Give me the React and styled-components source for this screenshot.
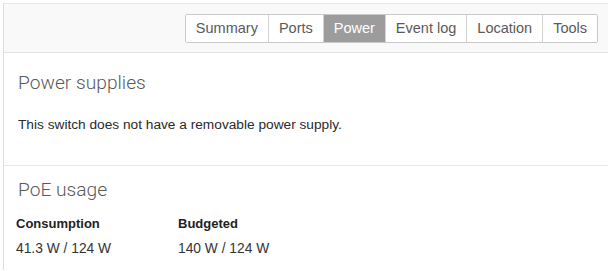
import React from "react";
import styled, { createGlobalStyle } from "styled-components";

const Global = createGlobalStyle`
  html, body { margin: 0; padding: 0; background: #fff; }
  body { font-family: "Liberation Sans", Arial, sans-serif; }
`;

const Page = styled.div`
  padding: 3px 0 0 3px;
`;

const Panel = styled.div`
  border-top: 1px solid #e6e6e6;
  border-left: 1px solid #dcdcdc;
  min-height: 267px;
  box-sizing: border-box;
`;

const Header = styled.div`
  height: 48px;
  background: #f9f9f9;
  border-bottom: 1px solid #e2e2e2;
  display: flex;
  justify-content: flex-end;
  align-items: center;
  padding-right: 10px;
`;

const Tabs = styled.div`
  display: flex;
  border: 1px solid #c9c9c9;
  border-radius: 2px;
  background: #fff;
  margin-top: 1px;
`;

const Tab = styled.div`
  height: 27px;
  line-height: 27px;
  padding: 0 10px;
  font-size: 14.5px;
  color: ${p => (p.$active ? "#fff" : "#5a5a5a")};
  background: ${p => (p.$active ? "#9c9c9c" : "#fff")};
  & + & { border-left: 1px solid #d2d2d2; }
`;

const Section = styled.section`
  padding: ${p => p.$top}px 14px ${p => p.$bottom}px;
  border-bottom: ${p => (p.$divider ? "1px solid #e6e6e6" : "none")};
`;

const Heading = styled.h2`
  margin: 0;
  font-family: Roboto, "Liberation Sans", Arial, sans-serif;
  font-weight: 300;
  font-size: 19.2px;
  line-height: 22px;
  color: #5a5a5a;
`;

const Text = styled.p`
  margin: ${p => p.$mt}px 0 0;
  font-size: 13.7px;
  line-height: 16px;
  color: #2a2a2a;
`;

const Stats = styled.div`
  display: grid;
  grid-template-columns: 162px 160px;
  row-gap: 9px;
  margin: 15px 0 0 -2px;
`;

const Label = styled.div`
  font-size: 13px;
  font-weight: bold;
  line-height: 16px;
  color: #222;
`;

const Value = styled.div`
  font-size: 13.8px;
  line-height: 16px;
  color: #333;
`;

const tabs = ["Summary", "Ports", "Power", "Event log", "Location", "Tools"];

export default function App() {
  return (
    <>
      <Global />
      <Page>
        <Panel>
          <Header>
            <Tabs>
              {tabs.map(t => (
                <Tab key={t} $active={t === "Power"}>{t}</Tab>
              ))}
            </Tabs>
          </Header>
          <Section $top={19} $bottom={32} $divider>
            <Heading>Power supplies</Heading>
            <Text $mt={23}>This switch does not have a removable power supply.</Text>
          </Section>
          <Section $top={13} $bottom={10}>
            <Heading>PoE usage</Heading>
            <Stats>
              <Label>Consumption</Label>
              <Label>Budgeted</Label>
              <Value>41.3 W / 124 W</Value>
              <Value>140 W / 124 W</Value>
            </Stats>
          </Section>
        </Panel>
      </Page>
    </>
  );
}
